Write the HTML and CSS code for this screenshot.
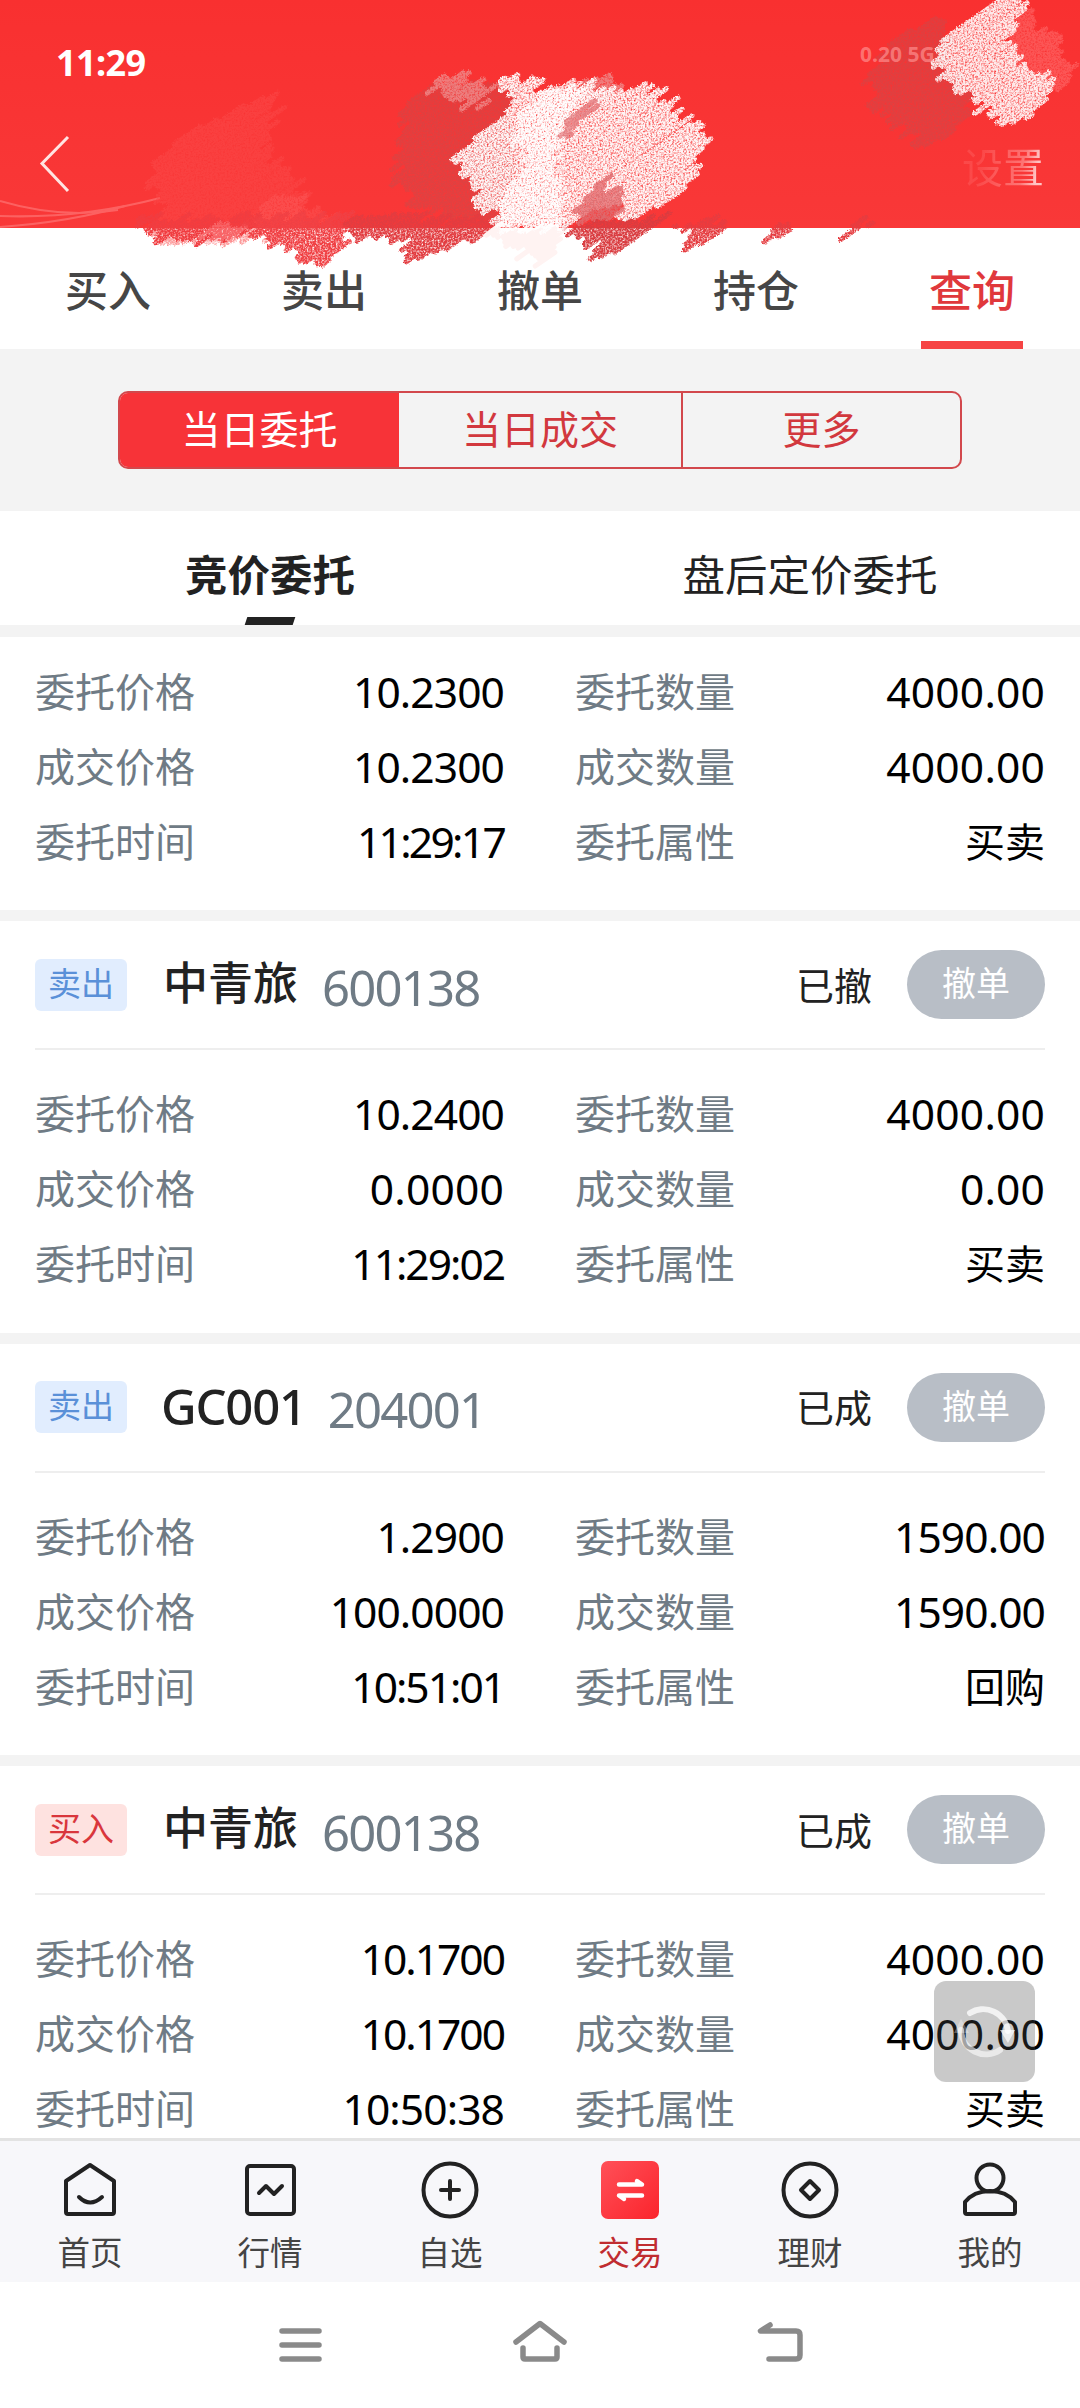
FILE: index.html
```html
<!DOCTYPE html>
<html lang="zh-CN">
<head>
<meta charset="utf-8">
<title>当日委托</title>
<link rel="stylesheet" href="styles.css">
</head>
<body>
<div class="app">
  <header class="top">
    <svg class="scribble" id="scribble" width="1080" height="280" viewBox="0 0 1080 280" aria-hidden="true">
      <defs>
        <filter id="grain" x="0" y="0" width="1080" height="280" filterUnits="userSpaceOnUse" color-interpolation-filters="sRGB">
          <feTurbulence type="fractalNoise" baseFrequency="0.55" numOctaves="2" seed="4" result="n"/>
          <feColorMatrix in="n" type="matrix" values="0 0 0 0 0  0 0 0 0 0  0 0 0 0 0  2.2 0 0 0 -0.27" result="a"/>
          <feDisplacementMap in="SourceGraphic" in2="n" scale="4" xChannelSelector="R" yChannelSelector="G" result="d"/>
          <feComposite in="d" in2="a" operator="in"/>
        </filter>
      </defs>
      <g fill="none" stroke="#ff8585" stroke-width="2" opacity=".55">
        <path d="M0 201Q60 219 118 210"/><path d="M0 216Q80 219 160 198"/><path d="M0 227Q70 222 125 206"/>
      </g>
    </svg>
    <div class="status"><span class="clock">11:29</span><span class="net">0.20 5G</span></div>
    <div class="bar">
      <svg class="back" width="32" height="58" viewBox="0 0 32 58"><path d="M29 2L3 28.500 29 56" fill="none" stroke="#ffe4e2" stroke-width="3"/></svg>
      <span class="settings">设置</span>
    </div>
  </header>
  <nav class="tabs">
    <span class="tab">买入</span><span class="tab">卖出</span><span class="tab">撤单</span><span class="tab">持仓</span><span class="tab tab-on">查询</span>
  </nav>
  <section class="filter">
    <div class="segments"><span class="seg seg-on">当日委托</span><span class="seg">当日成交</span><span class="seg seg-last">更多</span></div>
  </section>
  <nav class="kinds"><span class="kind kind-on">竞价委托</span><span class="kind">盘后定价委托</span></nav>
  <main class="list">
    <article class="card card-first">
      <div class="rows">
        <span class="k">委托价格</span><span class="v price">10.2300</span><span class="k k2">委托数量</span><span class="v">4000.00</span>
        <span class="k">成交价格</span><span class="v price">10.2300</span><span class="k k2">成交数量</span><span class="v">4000.00</span>
        <span class="k">委托时间</span><span class="v time-narrow">11:29:17</span><span class="k k2">委托属性</span><span class="v word">买卖</span>
      </div>
    </article>
    <article class="card">
      <div class="head"><span class="tag">卖出</span><b class="name">中青旅</b><span class="code">600138</span><span class="state">已撤</span><span class="cancel">撤单</span></div>
      <div class="rows">
        <span class="k">委托价格</span><span class="v price">10.2400</span><span class="k k2">委托数量</span><span class="v">4000.00</span>
        <span class="k">成交价格</span><span class="v">0.0000</span><span class="k k2">成交数量</span><span class="v">0.00</span>
        <span class="k">委托时间</span><span class="v time">11:29:02</span><span class="k k2">委托属性</span><span class="v word">买卖</span>
      </div>
    </article>
    <article class="card">
      <div class="head"><span class="tag">卖出</span><b class="name name-latin">GC001</b><span class="code code-near">204001</span><span class="state">已成</span><span class="cancel">撤单</span></div>
      <div class="rows">
        <span class="k">委托价格</span><span class="v price">1.2900</span><span class="k k2">委托数量</span><span class="v price">1590.00</span>
        <span class="k">成交价格</span><span class="v price">100.0000</span><span class="k k2">成交数量</span><span class="v price">1590.00</span>
        <span class="k">委托时间</span><span class="v time">10:51:01</span><span class="k k2">委托属性</span><span class="v word">回购</span>
      </div>
    </article>
    <article class="card">
      <div class="head"><span class="tag tag-buy">买入</span><b class="name">中青旅</b><span class="code">600138</span><span class="state">已成</span><span class="cancel">撤单</span></div>
      <div class="rows">
        <span class="k">委托价格</span><span class="v time">10.1700</span><span class="k k2">委托数量</span><span class="v">4000.00</span>
        <span class="k">成交价格</span><span class="v time">10.1700</span><span class="k k2">成交数量</span><span class="v">4000.00</span>
        <span class="k">委托时间</span><span class="v price">10:50:38</span><span class="k k2">委托属性</span><span class="v word">买卖</span>
      </div>
    </article>
    <div class="refresh">
      <svg width="101" height="101" viewBox="0 0 101 101"><g fill="none" stroke="#fff" stroke-opacity=".75" stroke-width="6" stroke-linecap="round"><path d="M36 32A25 25 0 0 1 74 50"/><path d="M66 69A25 25 0 0 1 27 49" stroke-opacity=".6"/></g><path d="M66 49H81L74 62Z" fill="#fff" fill-opacity=".7"/><path d="M20 52H35L27 38Z" fill="#fff" fill-opacity=".3"/></svg>
    </div>
  </main>
  <nav class="dock">
    <span class="item"><svg class="ico" viewBox="0 0 60 60"><path d="M30 5L54 21V52Q54 54 52 54H8Q6 54 6 52V21Z"/><path d="M19 37Q30 48 42 37"/></svg>首页</span>
    <span class="item"><svg class="ico" viewBox="0 0 60 60"><rect x="7" y="6" width="47" height="48" rx="3"/><path d="M19 33L26 26 34 34 42 26"/></svg>行情</span>
    <span class="item"><svg class="ico" viewBox="0 0 60 60"><circle cx="30" cy="30" r="26.500"/><path d="M30 21V39M21 30H39"/></svg>自选</span>
    <span class="item item-on"><svg class="ico" viewBox="0 0 60 60"><defs><linearGradient id="g" x1="0" y1="0" x2="1" y2="1"><stop offset="0" stop-color="#ff5058"/><stop offset="1" stop-color="#fb242c"/></linearGradient></defs><rect x="1" y="1" width="58" height="58" rx="7" fill="url(#g)" stroke="none"/><path d="M19 24.500H42L37 21M42 35.500H19L24 39" stroke="#fff" stroke-width="4.500"/></svg>交易</span>
    <span class="item"><svg class="ico" viewBox="0 0 60 60"><circle cx="30" cy="30" r="26.500"/><path d="M30 21L39 30 30 39 21 30Z"/></svg>理财</span>
    <span class="item"><svg class="ico" viewBox="0 0 60 60"><circle cx="30" cy="18" r="13.500"/><path d="M30 31Q46 31 55 42V52Q55 54 53 54H7Q5 54 5 52V42Q14 31 30 31Z"/></svg>我的</span>
  </nav>
  <nav class="sysnav">
    <svg class="sys" viewBox="0 0 60 60"><path d="M12 19H49M12 33H49M12 47H49"/></svg>
    <svg class="sys" viewBox="0 0 60 60"><path d="M6 30L30 11.500 54 30M13 36V45Q13 47 15 47H45Q47 47 47 45V36"/></svg>
    <svg class="sys" viewBox="0 0 60 60"><path d="M20 13L10.500 19H46Q50 19 50 23V43Q50 47 46 47H19"/></svg>
  </nav>
</div>
<script src="scribble.js"></script>
</body>
</html>
```
FILE: styles.css
```css
* { box-sizing: border-box; }
body {
  margin: 0;
  background: #fff;
  font-family: "Noto Sans", "Noto Sans CJK SC", sans-serif;
}
.app {
  width: 1080px;
  height: 2408px;
  display: flex;
  flex-direction: column;
  overflow: hidden;
  background: #fff;
}

/* header */
.top {
  position: relative;
  height: 228px;
  flex: none;
  background: linear-gradient(#f93030, #f93838);
  z-index: 1;
}
.scribble { position: absolute; left: 0; top: 0; }
.status {
  position: relative;
  display: flex;
  justify-content: space-between;
  height: 100px;
  padding: 26px 118px 0 56px;
  align-items: center;
}
.clock { color: #fff; font: 700 36px/1 "Noto Sans", sans-serif; letter-spacing: -.6px; }
.net { width: 102px; margin-top: -18px; color: rgba(255, 150, 150, .65); font: 700 21px/1 "Noto Sans", sans-serif; white-space: nowrap; }
.bar {
  position: relative;
  height: 128px;
  display: flex;
  justify-content: space-between;
  align-items: center;
  padding: 0 36px 0 39px;
}
.settings {
  margin-top: 5px;
  font-size: 41px;
  line-height: 50px;
  color: transparent;
  background: linear-gradient(100deg, rgba(255, 110, 110, .35) 25%, rgba(255, 150, 150, .65) 72%, #ffc4c4 88%);
  background-clip: text;
  -webkit-background-clip: text;
}

/* trade tabs */
.tabs { height: 121px; flex: none; display: grid; grid-template-columns: repeat(5, 1fr); justify-items: center; }
.tab {
  width: 102px;
  display: flex;
  justify-content: center;
  font-size: 43px;
  font-weight: 500;
  line-height: 62px;
  padding-top: 32px;
  color: #464646;
}
.tab-on { color: #e0383c; border-bottom: 8px solid #f64444; }

/* segmented filter */
.filter { height: 162px; flex: none; background: #f3f3f3; padding: 42px 118px; }
.segments {
  height: 78px;
  display: grid;
  grid-template-columns: 279px 282px 1fr;
  border: 2px solid #d2484c;
  border-radius: 10px;
  overflow: hidden;
}
.seg {
  display: flex;
  justify-content: center;
  align-items: center;
  font-size: 39px;
  line-height: 50px;
  padding-bottom: 2px;
  color: #d2383e;
}
.seg-on { background: #f73338; color: #fff; }
.seg-last { border-left: 2px solid #d2484c; }

/* order kinds */
.kinds {
  height: 126px;
  flex: none;
  display: grid;
  grid-template-columns: 1fr 1fr;
  border-bottom: 12px solid #f3f3f3;
  justify-items: center;
}
.kind {
  display: flex;
  flex-direction: column;
  align-items: center;
  font-size: 42.500px;
  line-height: 62px;
  padding-top: 33px;
  color: #222;
}
.kind-on { font-weight: 700; }
.kind-on::after {
  content: "";
  width: 48px;
  height: 8px;
  margin-top: 11px;
  background: #222;
  transform: skewX(-18deg);
}

/* orders */
.list { position: relative; flex: 1; min-height: 0; overflow: hidden; }
.card { height: 422.500px; border-bottom: 11.500px solid #f3f3f3; padding: 0 35px; }
.card-first { height: 284px; padding-top: 17px; }
.head {
  height: 129px;
  border-bottom: 2px solid #eee;
  margin-bottom: 26px;
  display: flex;
  align-items: center;
}
.tag {
  width: 92px;
  height: 52px;
  border-radius: 6px;
  background: #e1edfe;
  color: #5a90d8;
  font-size: 33px;
  line-height: 49px;
  text-align: center;
}
.tag-buy { background: #fee2e0; color: #d9363c; }
.name { margin: -3px 0 0 36px; font-size: 45px; font-weight: 500; line-height: 60px; color: #222; }
.name-latin { margin-left: 34px; font-size: 49px; letter-spacing: -1.200px; }
.code { margin: 4px 0 0 24px; font-size: 49px; line-height: 60px; letter-spacing: -1.800px; color: #6f7b85; }
.code-near { margin-left: 22px; }
.state { margin-left: auto; font-size: 38px; line-height: 50px; color: #222; }
.cancel {
  width: 138px;
  height: 69px;
  margin-left: 35px;
  border-radius: 35px;
  background: #b8bec6;
  color: #fff;
  font-size: 34px;
  line-height: 66px;
  text-align: center;
}
.rows { display: grid; grid-template-columns: 235px 234px 306px 235px; grid-auto-rows: 75px; }
.k, .v { line-height: 75px; white-space: nowrap; }
.k { font-size: 40px; color: #6f7b85; }
.k2 { padding-left: 71px; }
.v { font-size: 42.500px; color: #000; text-align: right; letter-spacing: .2px; }
.price { letter-spacing: -.9px; }
.time { letter-spacing: -2px; }
.time-narrow { letter-spacing: -2.700px; }
.word { font-size: 40px; letter-spacing: 0; }
.refresh {
  position: absolute;
  left: 934px;
  top: 1344px;
  width: 101px;
  height: 101px;
  border-radius: 12px;
  background: rgba(78, 78, 78, .306);
}

/* app dock */
.dock {
  height: 144px;
  flex: none;
  border-top: 3px solid #e3e3e3;
  background: #f7f7fa;
  display: grid;
  grid-template-columns: repeat(6, 1fr);
}
.item {
  display: flex;
  flex-direction: column;
  align-items: center;
  padding-top: 19px;
  font-size: 32.500px;
  line-height: 44px;
  gap: 11px;
  color: #444;
}
.item-on { color: #c02c30; }
.ico { width: 60px; height: 60px; flex: none; fill: none; stroke: #222; stroke-width: 4; stroke-linejoin: round; stroke-linecap: round; }

/* system navigation */
.sysnav { height: 126px; flex: none; display: flex; justify-content: center; gap: 180px; padding-top: 30px; }
.sys { width: 60px; height: 60px; fill: none; stroke: #8a8a8a; stroke-width: 5.500; stroke-linecap: round; stroke-linejoin: round; }
```
FILE: scribble.js
```js
// Crayon scribbles over the header: each shape is hatched with slanted strokes.
const shapes = [
  { c: '#fb4a4a', o: .55, p: [[148,165],[200,125],[275,92],[278,110],[262,145],[300,190],[310,228],[250,240],[175,242],[150,228],[165,205]] },
  { c: '#ff6a6a', o: .3, p: [[240,228],[275,197],[300,195],[340,228]] },
  { c: '#c94b4b', o: .5, p: [[405,110],[430,82],[510,88],[512,160],[500,222],[440,212],[398,190]] },
  { c: '#f03c40', o: 1, p: [[140,218],[260,218],[240,236],[212,244],[178,243],[155,234]] },
  { c: '#ff8486', o: .55, p: [[200,232],[250,222],[238,238],[212,244]] },
  { c: '#f04044', o: 1, p: [[245,218],[350,218],[346,246],[322,268],[305,261],[285,248],[256,236]] },
  { c: '#e23c40', o: 1, p: [[350,220],[490,216],[505,224],[478,238],[430,252],[408,262],[408,240],[366,238]] },
  { c: '#fff3f2', o: 1, p: [[492,230],[556,229],[560,254],[536,264]], plain: true },
  { c: '#d93c40', o: 1, p: [[570,222],[664,218],[640,238],[620,250],[594,262],[600,244],[578,241]] },
  { c: '#e53c40', o: 1, p: [[680,222],[726,222],[706,245],[680,251],[688,238]] },
  { c: '#e53c40', o: 1, p: [[776,222],[802,224],[790,232],[768,241]] },
  { c: '#e53c40', o: 1, p: [[850,222],[872,224],[858,231],[844,236]] },
  { c: '#ef8585', o: .9, p: [[430,85],[452,72],[490,92],[482,106],[462,103]] },
  { c: '#ef8585', o: .9, p: [[585,80],[600,78],[618,92],[600,106],[578,105]] },
  { c: '#fff', o: .95, p: [[458,152],[510,110],[500,80],[516,74],[540,88],[554,95],[574,85],[592,82],[612,94],[640,86],[665,97],[682,115],[698,133],[704,147],[702,163],[676,197],[650,210],[626,217],[612,203],[590,211],[568,227],[500,227],[496,215],[482,200],[460,167]] },
  { c: '#fff', o: .85, p: [[510,120],[545,90],[580,84],[570,110],[555,165],[565,205],[555,227],[505,227],[500,200],[530,165]] },
  { c: '#e27477', o: .9, p: [[557,137],[577,108],[604,96],[588,112],[566,138]] },
  { c: '#e06a6d', o: .95, p: [[578,210],[590,192],[604,180],[614,194],[624,202],[620,215],[590,224]] },
  { c: '#c74c4d', o: .5, p: [[866,85],[885,50],[905,33],[940,15],[952,28],[940,60],[974,108],[950,134],[924,145],[900,125],[876,105]] },
  { c: '#ff7474', o: .55, p: [[1020,14],[1048,30],[1062,45],[1072,76],[1058,92],[1029,72],[1003,47]] },
  { c: '#fff', o: .9, p: [[936,65],[948,37],[981,13],[1005,-4],[1025,-4],[1016,16],[1003,47],[1029,72],[1050,75],[1053,93],[1036,111],[998,131],[1002,115],[978,107],[974,93],[948,78]] }
];

let seed = 17;
const rnd = () => (seed = (seed * 16807) % 2147483647) / 2147483647;
const angle = -35 * Math.PI / 180, cos = Math.cos(angle), sin = Math.sin(angle);
const svg = document.getElementById('scribble');
const NS = 'http://www.w3.org/2000/svg';

for (const s of shapes) {
  const q = s.p.map(([x, y]) => [x * cos + y * sin, -x * sin + y * cos]);
  const ys = q.map(t => t[1]);
  let d = '';
  for (let v = Math.min(...ys) + 1; v < Math.max(...ys); v += 4.1) {
    const xs = [];
    q.forEach((a, i) => {
      const b = q[(i + 1) % q.length];
      if ((a[1] <= v) !== (b[1] <= v)) xs.push(a[0] + (v - a[1]) / (b[1] - a[1]) * (b[0] - a[0]));
    });
    xs.sort((a, b) => a - b);
    for (let i = 0; i + 1 < xs.length; i += 2) {
      const l = xs[i] + (rnd() - .5) * 20, r = xs[i + 1] + (rnd() - .5) * 20;
      if (r <= l) continue;
      const w = v + (rnd() - .5) * 2;
      d += `M${(l * cos - v * sin).toFixed(1)} ${(l * sin + v * cos).toFixed(1)}L${(r * cos - w * sin).toFixed(1)} ${(r * sin + w * cos).toFixed(1)}`;
    }
  }
  const path = document.createElementNS(NS, 'path');
  path.setAttribute('d', d);
  path.setAttribute('fill', 'none');
  path.setAttribute('stroke', s.c);
  path.setAttribute('stroke-width', 5);
  path.setAttribute('stroke-linecap', 'round');
  path.setAttribute('opacity', s.o);
  if (!s.plain) path.setAttribute('filter', 'url(#grain)');
  svg.appendChild(path);
}
```
